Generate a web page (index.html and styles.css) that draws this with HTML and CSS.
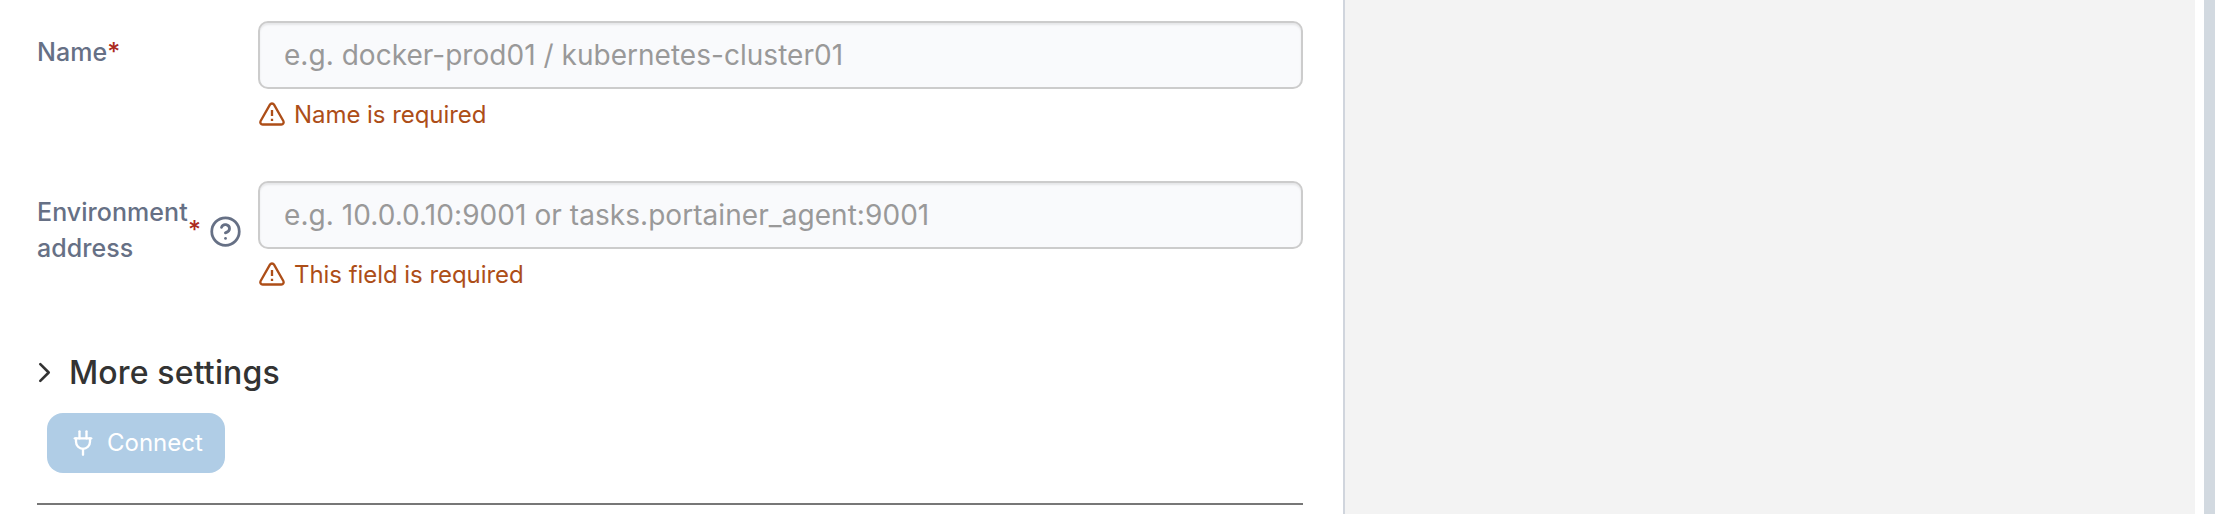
FILE: index.html
```html
<!DOCTYPE html>
<html lang="en">
<head>
<meta charset="utf-8">
<title>Environment details</title>
<link rel="stylesheet" href="styles.css">
</head>
<body>
<div class="page">
  <form class="form">
    <div class="row">
      <label class="label" for="name"><span>Name</span><span class="star">*</span></label>
      <div class="control">
        <input class="input" id="name" type="text" placeholder="e.g. docker-prod01 / kubernetes-cluster01">
        <div class="error">
          <svg class="warn" viewBox="0 0 24 24"><path d="m21.73 18-8-14a2 2 0 0 0-3.48 0l-8 14A2 2 0 0 0 4 21h16a2 2 0 0 0 1.73-3Z"/><path class="mark" d="M12 8.5v5.2M12 16v2"/></svg>
          <span>Name is required</span>
        </div>
      </div>
    </div>
    <div class="row">
      <label class="label" for="address"><span class="two-line">Environment address</span><span class="star">*</span>
        <svg class="help" viewBox="0 0 24 24"><circle cx="12" cy="12" r="10"/><path d="M9.09 9a3 3 0 0 1 5.83 1c0 2-3 3-3 3"/><path d="M12 17h.01"/></svg>
      </label>
      <div class="control">
        <input class="input address" id="address" type="text" placeholder="e.g. 10.0.0.10:9001 or tasks.portainer_agent:9001">
        <div class="error">
          <svg class="warn" viewBox="0 0 24 24"><path d="m21.73 18-8-14a2 2 0 0 0-3.48 0l-8 14A2 2 0 0 0 4 21h16a2 2 0 0 0 1.73-3Z"/><path class="mark" d="M12 8.5v5.2M12 16v2"/></svg>
          <span>This field is required</span>
        </div>
      </div>
    </div>
    <div class="more">
      <svg class="chevron" viewBox="0 0 12 20"><path d="m2 2 8 8-8 8"/></svg>
      <span>More settings</span>
    </div>
    <button class="connect" type="button" disabled>
      <svg class="plug" viewBox="0 0 24 24"><path d="M12 22v-5"/><path d="M9 8V2"/><path d="M15 8V2"/><path d="M5 8h14"/><path d="M6 8v3a6 6 0 0 0 12 0V8"/></svg>
      <span>Connect</span>
    </button>
    <hr class="rule">
  </form>
  <aside class="side"></aside>
  <div class="scroll"></div>
</div>
</body>
</html>
```
FILE: styles.css
```css
* { box-sizing: border-box; }
body {
  margin: 0;
  background: #fff;
  font-family: Inter, "Liberation Sans", sans-serif;
}
svg {
  flex: none;
  fill: none;
  stroke: currentColor;
  stroke-width: 2;
  stroke-linecap: round;
  stroke-linejoin: round;
}
.page {
  display: flex;
  height: 514px;
  overflow: hidden;
}
.form {
  width: 1343px;
  padding: 21px 40px 0 37px;
}
.row {
  display: flex;
  height: 160px;
}
.label {
  display: flex;
  align-items: center;
  align-self: flex-start;
  width: 221px;
  padding-top: 13px;
  color: #667085;
  font-size: 25px;
  font-weight: 500;
  letter-spacing: .05px;
  line-height: 36px;
}
.two-line { width: 151px; }
.star { color: #ac2a1e; }
.two-line + .star { align-self: center; }
.help {
  width: 33px;
  height: 33px;
  margin: 2px 0 0 8px;
}
.control { flex: 1; }
.input {
  display: block;
  width: 1045px;
  height: 68px;
  padding: 0 24px;
  border: 2px solid #ccc;
  border-radius: 10px;
  background: #f9fafc;
  box-shadow: inset 0 2px 2px rgba(0, 0, 0, .075);
  color: #333;
  font: 28px Inter, "Liberation Sans", sans-serif;
  letter-spacing: .03px;
}
.address { letter-spacing: .06px; }
.input::placeholder { color: #999; opacity: 1; }
.error {
  display: flex;
  align-items: center;
  gap: 8px;
  height: 36px;
  margin-top: 7px;
  color: #ad4e18;
  font-size: 24px;
  letter-spacing: -.05px;
}
.warn {
  width: 28px;
  height: 28px;
}
.mark { stroke-linecap: butt; }
.more {
  display: flex;
  align-items: center;
  height: 44px;
  margin-top: 9px;
  gap: 18px;
  padding-left: 1px;
  color: #333;
  font-size: 32px;
  font-weight: 500;
  letter-spacing: .15px;
}
.chevron {
  width: 13px;
  height: 21px;
  stroke-width: 2.5;
}
.connect {
  display: flex;
  align-items: center;
  gap: 10px;
  width: 178px;
  height: 60px;
  margin: 19px 0 0 10px;
  padding: 0 22px 1px;
  border: 0;
  border-radius: 16px;
  background: #b0cde6;
  color: #fff;
  font: 24px Inter, "Liberation Sans", sans-serif;
}
.plug {
  width: 28px;
  height: 28px;
}
.rule {
  height: 2px;
  margin: 30px 0 0;
  border: 0;
  background: #777;
}
.side {
  width: 852px;
  border-left: 2px solid #d0d5dd;
  background: #f3f3f3;
}
.scroll {
  width: 11px;
  margin-left: 9px;
  background: #d2d9e0;
}
```
